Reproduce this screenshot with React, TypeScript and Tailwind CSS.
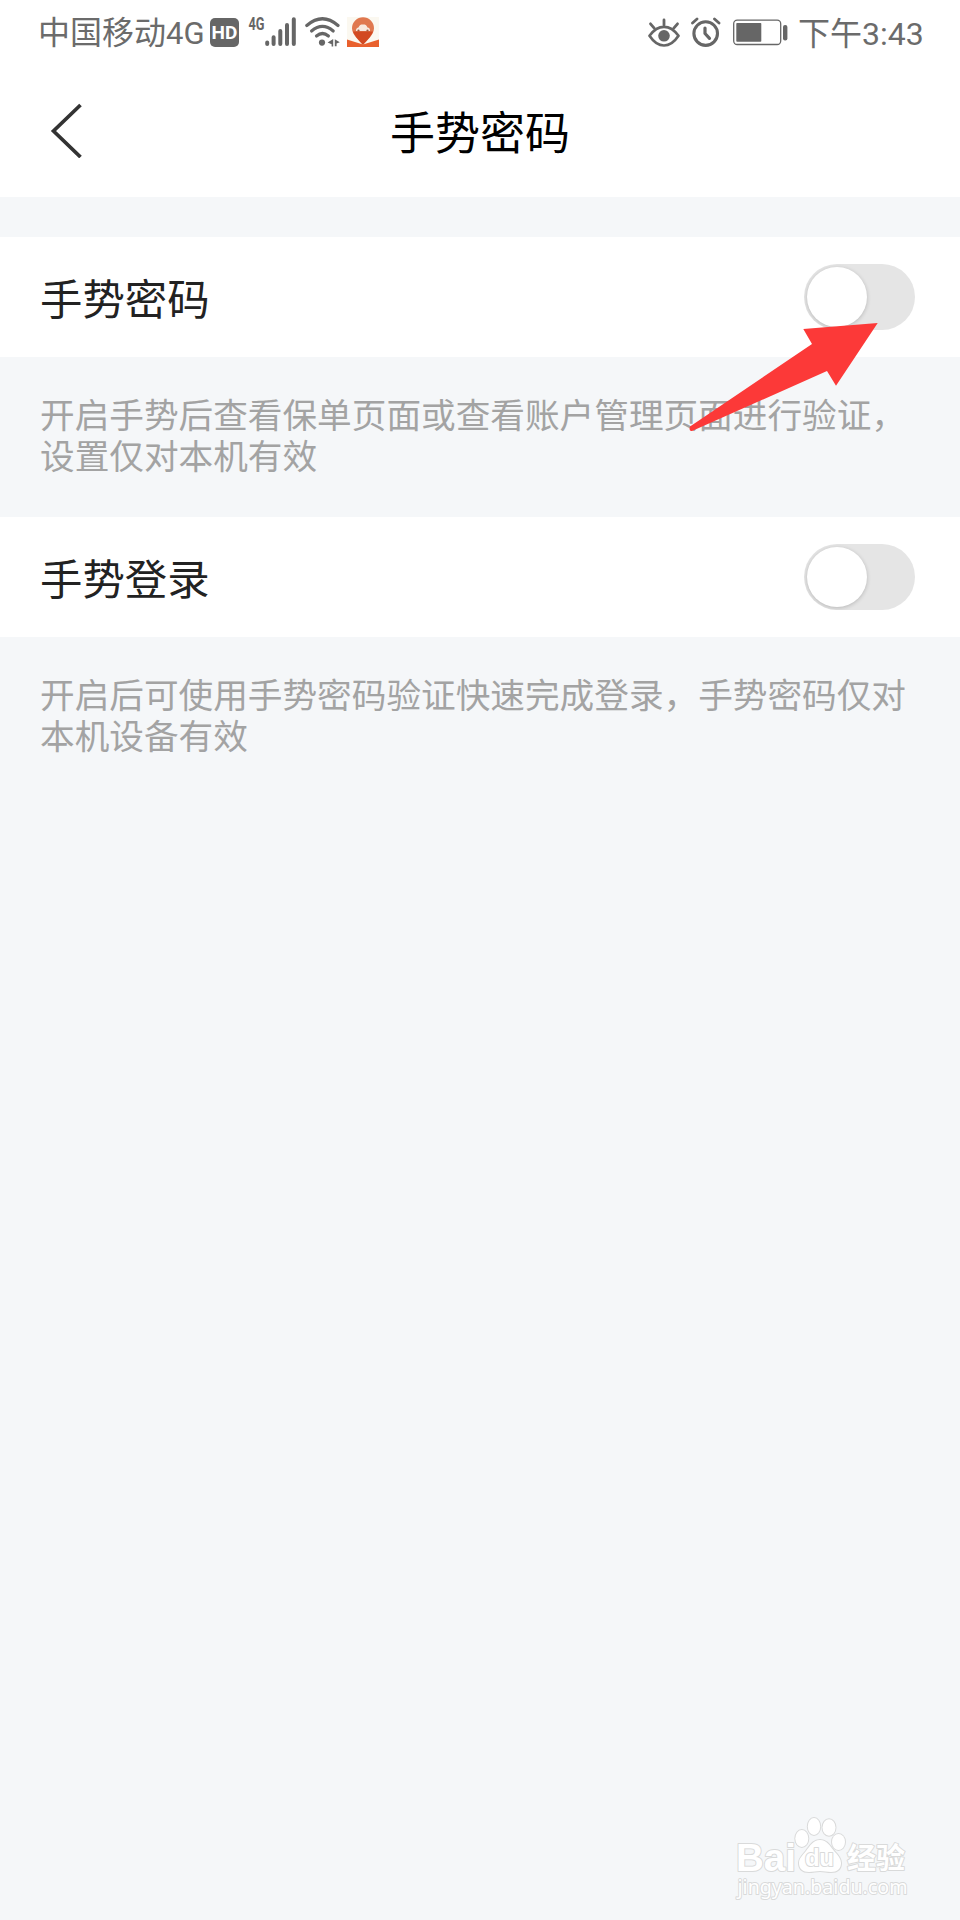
import React, { useState } from 'react';

interface SettingProps {
  title: string;
  lines: string[];
}

const settings: SettingProps[] = [
  {
    title: '手势密码',
    lines: ['开启手势后查看保单页面或查看账户管理页面进行验证，', '设置仅对本机有效'],
  },
  {
    title: '手势登录',
    lines: ['开启后可使用手势密码验证快速完成登录，手势密码仅对', '本机设备有效'],
  },
];

function SignalIcon() {
  return (
    <svg className="ml-[9px] h-[30px] w-12 overflow-visible" viewBox="0 0 48 30">
      <text x="0.5" y="13" fontSize="17.5" fontWeight="700" textLength="16" lengthAdjust="spacingAndGlyphs" fill="#666">
        4G
      </text>
      <g stroke="#666" strokeWidth="4" strokeLinecap="round">
        <path d="M19.2 25.6v1.5M25.6 20.2v6.9M32.3 14v13.1M39 8v19.1M45.8 2.2v24.9" />
      </g>
    </svg>
  );
}

function WifiIcon() {
  return (
    <svg className="ml-[9px] h-[30px] w-9" viewBox="0 0 36 30">
      <g fill="none" stroke="#666" strokeWidth="3.2" strokeLinecap="round">
        <path d="M1.8 8.5Q17.5 -5 33 8.5" />
        <path d="M6.6 14Q17.5 4.8 28.2 14" />
        <path d="M11.5 19Q17.5 14 23.4 19" />
      </g>
      <circle cx="17" cy="25.6" r="3.1" fill="#666" />
      <path d="M28.2 22v7.4h-1.6v-2.2L22.6 25.4zM29.8 22.2l5 3-3.2 1.4v2.6h-1.8z" fill="#666" />
    </svg>
  );
}

function PinIcon() {
  return (
    <svg className="ml-1.5 h-[30px] w-8" viewBox="0 0 32 30">
      <path d="M0 0h32v30H0z" fill="#fbf8f0" />
      <path d="M0 22.5l16 5 16-5V30H0z" fill="#e9602d" />
      <path d="M16 28C13 24 5 18 5 11.2a11 11 0 0 1 22 0C27 18 19 24 16 28z" fill="#e0784f" />
      <path d="M6 14.5h20C24 20 19 24 16 28 13 24 8 20 6 14.500z" fill="#d24a22" />
      <path d="M9 14c0-3 1.500-3.200 2.500-3.500 1-2.500 2-3 4.500-3s3.500.5 4.500 3c1.500.3 2.500.8 2.500 3.500z" fill="#f8e9df" />
      <circle cx="11.500" cy="13.500" r="1.100" fill="#a05a40" />
      <circle cx="20.500" cy="13.500" r="1.100" fill="#a05a40" />
    </svg>
  );
}

function EyeIcon() {
  return (
    <svg className="h-[30px] w-8" viewBox="0 0 32 30" fill="none" stroke="#666" strokeLinecap="round">
      <path d="M1.5 18.7Q8 9.8 16 9.8t14.5 8.9Q24 28.5 16 28.5T1.5 18.7z" strokeWidth="2.7" strokeLinejoin="round" />
      <path d="M16 3v5M2.5 6.8l3.7 4.4M29.5 6.800l-3.700 4.400" strokeWidth="2.800" />
      <circle cx="16" cy="18.800" r="5.800" fill="#666" stroke="none" />
    </svg>
  );
}

function AlarmIcon() {
  return (
    <svg className="ml-[11px] h-[30px] w-[30px]" viewBox="0 0 30 30" fill="none" stroke="#666" strokeLinecap="round">
      <circle cx="14.7" cy="16.6" r="11.8" strokeWidth="3.100" />
      <path d="M14 11v5.5l4.5 4.8" strokeWidth="3.2" strokeLinejoin="round" />
      <path d="M1.5 6l4.5-4M23.5 2l4.5 4" strokeWidth="2.8" />
    </svg>
  );
}

function BatteryIcon() {
  return (
    <svg className="ml-3 h-[30px] w-14" viewBox="0 0 56 30">
      <rect x="0.7" y="3.2" width="47" height="24.3" rx="3.5" fill="none" stroke="#666" strokeWidth="1.3" />
      <rect x="3.3" y="6" width="25" height="18.7" rx="0.8" fill="#666" />
      <rect x="50" y="8" width="4.4" height="15.5" rx="2" fill="#666" />
    </svg>
  );
}

function StatusBar() {
  return (
    <div className="flex h-16 items-center justify-between pl-[38px] pr-9 text-[32px] text-[#6b6b6b]">
      <div className="flex items-center">
        <span className="w-[169px] whitespace-nowrap pt-[3px] leading-[48px]">
          中国移动<span className="text-[31px]">4G</span>
        </span>
        <span className="ml-[3px] flex h-[29px] w-[29px] items-center justify-center rounded-[5px] bg-[#666] font-[Roboto] text-[19px] font-bold leading-none text-white">
          HD
        </span>
        <SignalIcon />
        <WifiIcon />
        <PinIcon />
      </div>
      <div className="flex items-center">
        <EyeIcon />
        <AlarmIcon />
        <BatteryIcon />
        <span className="ml-[9px] w-[126px] whitespace-nowrap pt-[3px] leading-[48px]">下午3:43</span>
      </div>
    </div>
  );
}

function Header() {
  return (
    <header className="grid h-[133px] grid-cols-[120px_1fr_120px] items-center">
      <button className="pb-0.5 pl-[50px]">
        <svg className="h-[56px] w-8" viewBox="0 0 32 56" fill="none">
          <path d="M30.5 3L3.5 29 30.5 55" stroke="#333" strokeWidth="3.7" />
        </svg>
      </button>
      <h1 className="pt-2 text-center text-[45px] leading-[66px] text-black">手势密码</h1>
    </header>
  );
}

function Toggle() {
  const [on, setOn] = useState(false);

  return (
    <button
      role="switch"
      aria-checked={on}
      onClick={() => setOn(!on)}
      className={`flex h-[66px] w-[111px] items-center overflow-hidden rounded-full px-[3px] ${on ? 'justify-end bg-[#4cd964]' : 'bg-[#e5e5e5]'}`}
    >
      <span className="h-[60px] w-[60px] rounded-full bg-white shadow-[0_1px_4px_rgba(0,0,0,0.2)]" />
    </button>
  );
}

function Setting({ title, lines }: SettingProps) {
  return (
    <section className="h-[280px]">
      <div className="flex h-[120px] items-center justify-between bg-white pl-10 pr-[45px]">
        <span className="pt-[7px] text-[42.4px] text-[#222]">{title}</span>
        <Toggle />
      </div>
      <div className="whitespace-nowrap pl-10 pt-[39px] text-[34.65px] leading-[41px] text-[#a3a3a3]">
        {lines.map((line) => (
          <p key={line}>{line}</p>
        ))}
      </div>
    </section>
  );
}

function Watermark() {
  return (
    <svg
      className="absolute bottom-5 right-[49px] h-[90px] w-[180px] overflow-visible"
      viewBox="0 0 180 90"
      fill="#fff"
      stroke="#d9dada"
      strokeWidth="2"
      strokeLinejoin="round"
      paintOrder="stroke"
    >
      <text x="5" y="61" fontSize="39" fontWeight="700" fontFamily="Liberation Sans, sans-serif" textLength="60" lengthAdjust="spacingAndGlyphs">
        Bai
      </text>
      <ellipse cx="70.8" cy="28.5" rx="6.5" ry="8.5" />
      <ellipse cx="83" cy="16.5" rx="6.2" ry="8.5" />
      <ellipse cx="98" cy="17.5" rx="6.5" ry="8.3" />
      <ellipse cx="107.5" cy="32" rx="6.5" ry="8" />
      <path d="M89 30c7 0 10 6 14 11 4 4 7 8 7 12 0 6-4 9-10 9-4 0-7-1-11-1s-7 1-11 1c-6 0-10-3-10-9 0-5 4-8 7-12 4-5 7-11 14-11z" />
      <text x="74" y="56" fontSize="24" fontWeight="700" fontFamily="Liberation Sans, sans-serif" textLength="29">
        du
      </text>
      <text x="116" y="58.5" fontSize="29" fontWeight="700" fontFamily="Noto Sans CJK SC, sans-serif">
        经验
      </text>
      <text x="6.5" y="83.5" fontSize="20.5" fontFamily="Noto Sans, sans-serif" textLength="170" lengthAdjust="spacingAndGlyphs">
        jingyan.baidu.com
      </text>
    </svg>
  );
}

export default function App() {
  return (
    <div className="relative h-[1920px] w-[960px] overflow-hidden bg-[#f5f7f9] font-[Roboto,'Noto_Sans_CJK_SC',sans-serif]">
      <div className="bg-white">
        <StatusBar />
        <Header />
      </div>
      <main className="pt-10">
        {settings.map((item) => (
          <Setting key={item.title} {...item} />
        ))}
      </main>

      {/* pointer over the first switch */}
      <svg className="absolute left-[680px] top-[315px] h-[125px] w-[205px]" viewBox="0 0 205 125">
        <path d="M197.7 8L123.3 14 132 29 10 111.5Q8.5 116.5 12 116L147 56l9 14.7z" fill="#fc3938" />
      </svg>
      <Watermark />
    </div>
  );
}
